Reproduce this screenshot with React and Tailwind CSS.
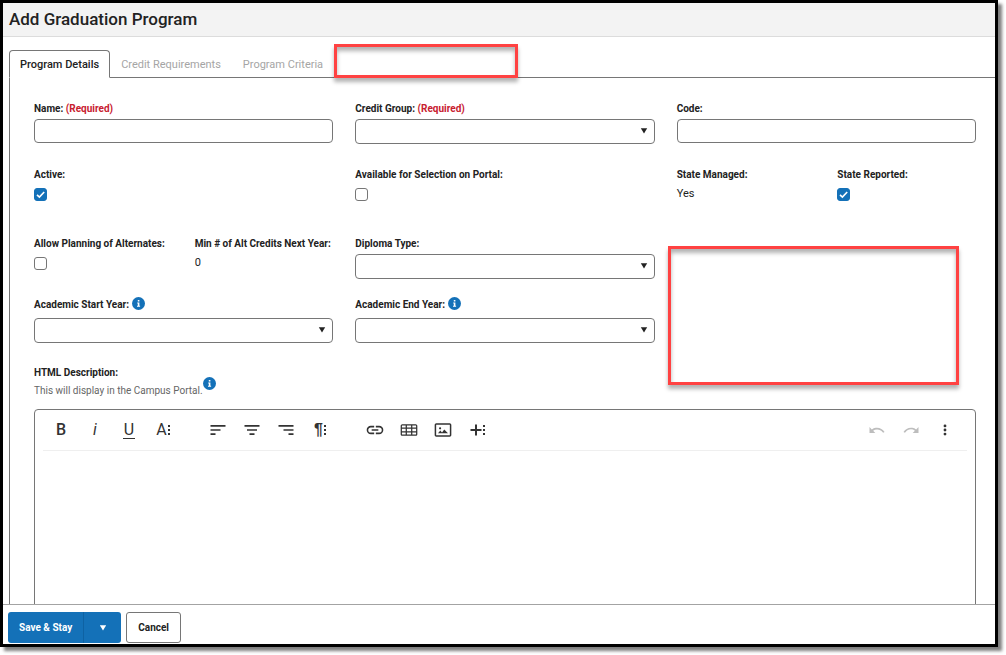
import { useState } from "react";
import clsx from "clsx";

const TABS = ["Program Details", "Credit Requirements", "Program Criteria"];

function InfoButton({ label }) {
  return (
    <button type="button" aria-label={label} className="shrink-0">
      <svg viewBox="0 0 13 13" className="block size-[13px]">
        <circle cx="6.5" cy="6.5" r="6.5" fill="#1471b8" />
        <path d="M5.8 3h1.6v1.5H5.8zM5.2 5.5h2.2v3.2h.7v1H5v-1h.8V6.5h-.6z" fill="#fff" />
      </svg>
    </button>
  );
}

function Label({ htmlFor, required, children }) {
  return (
    <label htmlFor={htmlFor} className="block text-[10px] leading-4 font-bold whitespace-nowrap">
      {children}
      {required && <span className="text-[#c8202f]"> (Required)</span>}
    </label>
  );
}

function TextField({ id, label, required }) {
  return (
    <div className="col-span-2">
      <Label htmlFor={id} required={required}>{label}</Label>
      <input
        id={id}
        type="text"
        className="mt-0.5 block h-6 w-full rounded border border-[#767676] bg-white px-2 text-xs outline-none"
      />
    </div>
  );
}

function SelectField({ id, label, required, info }) {
  return (
    <div className="col-span-2">
      <div className="flex items-start gap-[3px]">
        <Label htmlFor={id} required={required}>{label}</Label>
        {info && <InfoButton label={info} />}
      </div>
      <div className={clsx("relative", info ? "mt-[5px]" : "mt-0.5")}>
        <select
          id={id}
          className="block h-[25px] w-full appearance-none rounded border border-[#767676] bg-white px-2 text-xs outline-none"
        >
          <option value=""></option>
        </select>
        <svg viewBox="0 0 8 6" className="pointer-events-none absolute top-[9px] right-[7px] h-1.5 w-2">
          <path d="M.8.3h6.4L4 5.6z" fill="#222" />
        </svg>
      </div>
    </div>
  );
}

function CheckField({ id, label, defaultChecked, wide }) {
  return (
    <div className={wide ? "col-span-2" : ""}>
      <Label htmlFor={id}>{label}</Label>
      <div className="relative mt-[5px] size-[13px]">
        <input
          id={id}
          type="checkbox"
          defaultChecked={defaultChecked}
          className="peer block size-[13px] appearance-none rounded-[3px] border border-[#767676] bg-white checked:border-[#1471b8] checked:bg-[#1471b8]"
        />
        <svg
          viewBox="0 0 13 13"
          className="pointer-events-none absolute inset-0 hidden size-[13px] peer-checked:block"
        >
          <path d="M3 6.8l2.4 2.3L10.2 4" fill="none" stroke="#fff" strokeWidth="1.6" />
        </svg>
      </div>
    </div>
  );
}

function ValueField({ label, value }) {
  return (
    <div>
      <div className="text-[10px] leading-4 font-bold whitespace-nowrap">{label}</div>
      <div className="mt-0.5 text-[11px] leading-[17px]">{value}</div>
    </div>
  );
}

function Row({ className, children }) {
  return <div className={clsx("grid grid-cols-6 gap-x-[22px]", className)}>{children}</div>;
}

function ToolButton({ label, disabled, children }) {
  return (
    <button
      type="button"
      aria-label={label}
      disabled={disabled}
      className="flex h-10 w-[34px] items-center justify-center text-base leading-5 text-[#333] disabled:text-[#bdbdbd]"
    >
      {children}
    </button>
  );
}

function Icon({ d }) {
  return (
    <svg viewBox="0 0 24 24" className="size-5" fill="currentColor">
      <path d={d} />
    </svg>
  );
}

// three small squares that mark a button with more options
function Dots() {
  return (
    <svg viewBox="0 0 2 10" className="h-2.5 w-0.5" fill="currentColor">
      <path d="M0 0h2v2H0zM0 4h2v2H0zM0 8h2v2H0z" />
    </svg>
  );
}

function Toolbar() {
  return (
    <div className="mx-2 flex justify-between border-b border-[#efefef] pr-[5px] pl-px">
      <div className="flex gap-[21px]">
        <div className="flex">
          <ToolButton label="Bold"><span className="font-medium">B</span></ToolButton>
          <ToolButton label="Italic"><span className="italic">i</span></ToolButton>
          <ToolButton label="Underline">
            <span className="border-b border-current px-px leading-4">U</span>
          </ToolButton>
          <ToolButton label="More Text">
            <span className="mr-px">A</span>
            <Dots />
          </ToolButton>
        </div>
        <div className="flex">
          <ToolButton label="Align Left"><Icon d="M3 6h18v2H3zM3 11h12v2H3zM3 16h6v2H3z" /></ToolButton>
          <ToolButton label="Align Center"><Icon d="M3 6h18v2H3zM6 11h12v2H6zM9 16h6v2H9z" /></ToolButton>
          <ToolButton label="Align Right"><Icon d="M3 6h18v2H3zM9 11h12v2H9zM15 16h6v2h-6z" /></ToolButton>
          <ToolButton label="More Paragraph">
            <span className="mr-px font-['Liberation_Sans',sans-serif] font-bold">¶</span>
            <Dots />
          </ToolButton>
        </div>
        <div className="flex">
          <ToolButton label="Insert Link">
            <Icon d="M3.9 12c0-1.7 1.4-3.1 3.1-3.1h4V7H7a5 5 0 0 0 0 10h4v-1.9H7A3.1 3.1 0 0 1 3.9 12zM8 13h8v-2H8zM17 7h-4v1.9h4a3.1 3.1 0 0 1 0 6.2h-4V17h4a5 5 0 0 0 0-10z" />
          </ToolButton>
          <ToolButton label="Insert Table">
            <Icon d="M20,5H4C2.9,5,2,5.9,2,7v10c0,1.1,0.9,2,2,2h16c1.1,0,2-0.9,2-2V7C22,5.9,21.1,5,20,5z M9.5,13.5v-3h5v3H9.5z M14.5,15v2.5h-5V15H14.5z M9.5,9V6.5h5V9H9.5z M3.5,7c0-0.3,0.2-0.5,0.5-0.5h4V9H3.5V7z M3.5,10.5H8v3H3.5V10.5z M3.5,17v-2H8v2.5H4C3.7,17.5,3.5,17.3,3.5,17z M20.5,17c0,0.3-0.2,0.5-0.5,0.5h-4V15h4.5V17z M20.5,13.5H16v-3h4.5V13.5z M20.5,9H16V6.5h4c0.3,0,0.5,0.2,0.5,0.5V9z" />
          </ToolButton>
          <ToolButton label="Insert Image">
            <Icon d="M18 16H6l2.8-3.4 2 2.3 2.7-3.4zM8.5 8.7a1.3 1.3 0 1 0 0 2.6 1.3 1.3 0 0 0 0-2.6zM22,6v12c0,1.1-0.9,2-2,2H4c-1.1,0-2-0.9-2-2V6c0-1.1,0.9-2,2-2h16C21.1,4,22,4.9,22,6z M20.2,5.8H3.8v12.4h16.4z" />
          </ToolButton>
          <ToolButton label="More Rich">
            <svg viewBox="0 0 12 12" className="mr-px size-3" fill="currentColor">
              <path d="M5 .5h2V5h4.5v2H7v4.5H5V7H.5V5H5z" />
            </svg>
            <Dots />
          </ToolButton>
        </div>
      </div>
      <div className="flex">
        <ToolButton label="Undo" disabled>
          <Icon d="M10.4,9.4c-1.7,0.3-3.2,0.9-4.6,2L3,8.5v7h7l-2.7-2.7c3.7-2.6,8.8-1.8,11.5,1.9c0.2,0.2,0.4,0.5,0.5,0.7l1.8-0.9C18.8,10.8,14.7,8.7,10.4,9.4z" />
        </ToolButton>
        <ToolButton label="Redo" disabled>
          <Icon d="M13.6,9.4c1.7,0.3,3.2,0.9,4.6,2L21,8.5v7h-7l2.7-2.7C13,10.1,7.9,11,5.3,14.7c-0.2,0.2-0.4,0.5-0.5,0.7L3,14.5C5.1,10.8,9.3,8.7,13.6,9.4z" />
        </ToolButton>
        <ToolButton label="More Misc">
          <Icon d="M12 5.4a1.7 1.7 0 1 0 0 3.4 1.7 1.7 0 0 0 0-3.4zM12 10.3a1.7 1.7 0 1 0 0 3.4 1.7 1.7 0 0 0 0-3.4zM12 15.2a1.7 1.7 0 1 0 0 3.4 1.7 1.7 0 0 0 0-3.4z" />
        </ToolButton>
      </div>
    </div>
  );
}

function Highlight({ className }) {
  return (
    <div
      className={clsx(
        "pointer-events-none absolute border-3 border-[#ff4242] shadow-[0_4px_4px_rgba(0,0,0,0.3),inset_0_4px_4px_rgba(0,0,0,0.3)]",
        className,
      )}
    />
  );
}

export default function App() {
  const [tab, setTab] = useState(TABS[0]);

  return (
    <div className="h-screen bg-white pr-2 pb-2 font-[Roboto,sans-serif] text-[#222]">
      <div className="relative flex h-full flex-col border-3 border-black bg-white shadow-[4px_4px_3px_rgba(0,0,0,0.5)]">
        <header className="border-b border-[#dcdcdc] bg-[#f3f3f3] px-1.5 py-[3px]">
          <h1 className="text-[17px] leading-[27px] font-medium">Add Graduation Program</h1>
        </header>

        <main className="flex min-h-0 flex-1 flex-col overflow-hidden pt-[13px] pl-1.5">
          <div role="tablist" className="relative z-10 -mb-px flex">
            {TABS.map((name) => (
              <button
                key={name}
                type="button"
                role="tab"
                aria-selected={tab === name}
                onClick={() => setTab(name)}
                className={clsx(
                  "h-7 rounded-t border px-[10px] pt-0.5 text-[11px] leading-4",
                  tab === name
                    ? "border-[#767676] border-b-white bg-white font-medium"
                    : "border-transparent text-[#a5a5a5]",
                )}
              >
                {name}
              </button>
            ))}
          </div>

          <form className="border-t border-l border-[#767676] pt-[23px] pr-[19px] pl-6">
            <Row>
              <TextField id="name" label="Name:" required />
              <SelectField id="creditGroup" label="Credit Group:" required />
              <TextField id="code" label="Code:" />
            </Row>
            <Row className="mt-[23px]">
              <CheckField id="active" label="Active:" defaultChecked wide />
              <CheckField id="portal" label="Available for Selection on Portal:" wide />
              <ValueField label="State Managed:" value="Yes" />
              <CheckField id="stateReported" label="State Reported:" defaultChecked />
            </Row>
            <Row className="mt-[34px]">
              <CheckField id="alternates" label="Allow Planning of Alternates:" />
              <ValueField label="Min # of Alt Credits Next Year:" value="0" />
              <SelectField id="diplomaType" label="Diploma Type:" />
            </Row>
            <Row className="mt-[18px]">
              <SelectField id="startYear" label="Academic Start Year:" info="About start year" />
              <SelectField id="endYear" label="Academic End Year:" info="About end year" />
            </Row>

            <div className="mt-[22px] flex items-center">
              <div>
                <div id="descLabel" className="text-[10px] leading-4 font-bold">HTML Description:</div>
                <p className="text-[10px] leading-5 text-[#666]">This will display in the Campus Portal.</p>
              </div>
              <InfoButton label="About the description" />
            </div>
            <div className="mt-2 rounded border border-[#767676]">
              <Toolbar />
              <div
                contentEditable
                suppressContentEditableWarning
                role="textbox"
                aria-labelledby="descLabel"
                className="min-h-64 p-4 text-xs outline-none"
              />
            </div>
          </form>
        </main>

        <footer className="flex gap-[5px] border-t border-[#a3a3a3] px-[5px] pt-[7px] pb-px text-[10px] font-bold">
          <div className="flex h-[31px] overflow-hidden rounded-[3px] bg-[#1471b8] text-white">
            <button type="button" className="border-r border-[#0e62a3] px-[11px]">Save &amp; Stay</button>
            <button type="button" aria-label="More save options" className="flex w-[37px] items-center justify-center">
              <svg viewBox="0 0 8 6" className="h-1.5 w-2">
                <path d="M.8.3h6.4L4 5.6z" fill="#fff" />
              </svg>
            </button>
          </div>
          <button type="button" className="h-[31px] rounded-[3px] border border-[#767676] bg-white px-[11px]">
            Cancel
          </button>
        </footer>

        <Highlight className="top-[41px] left-[331px] h-[34px] w-[184px]" />
        <Highlight className="top-[243px] right-9 h-[139px] w-[291px]" />
      </div>
    </div>
  );
}
